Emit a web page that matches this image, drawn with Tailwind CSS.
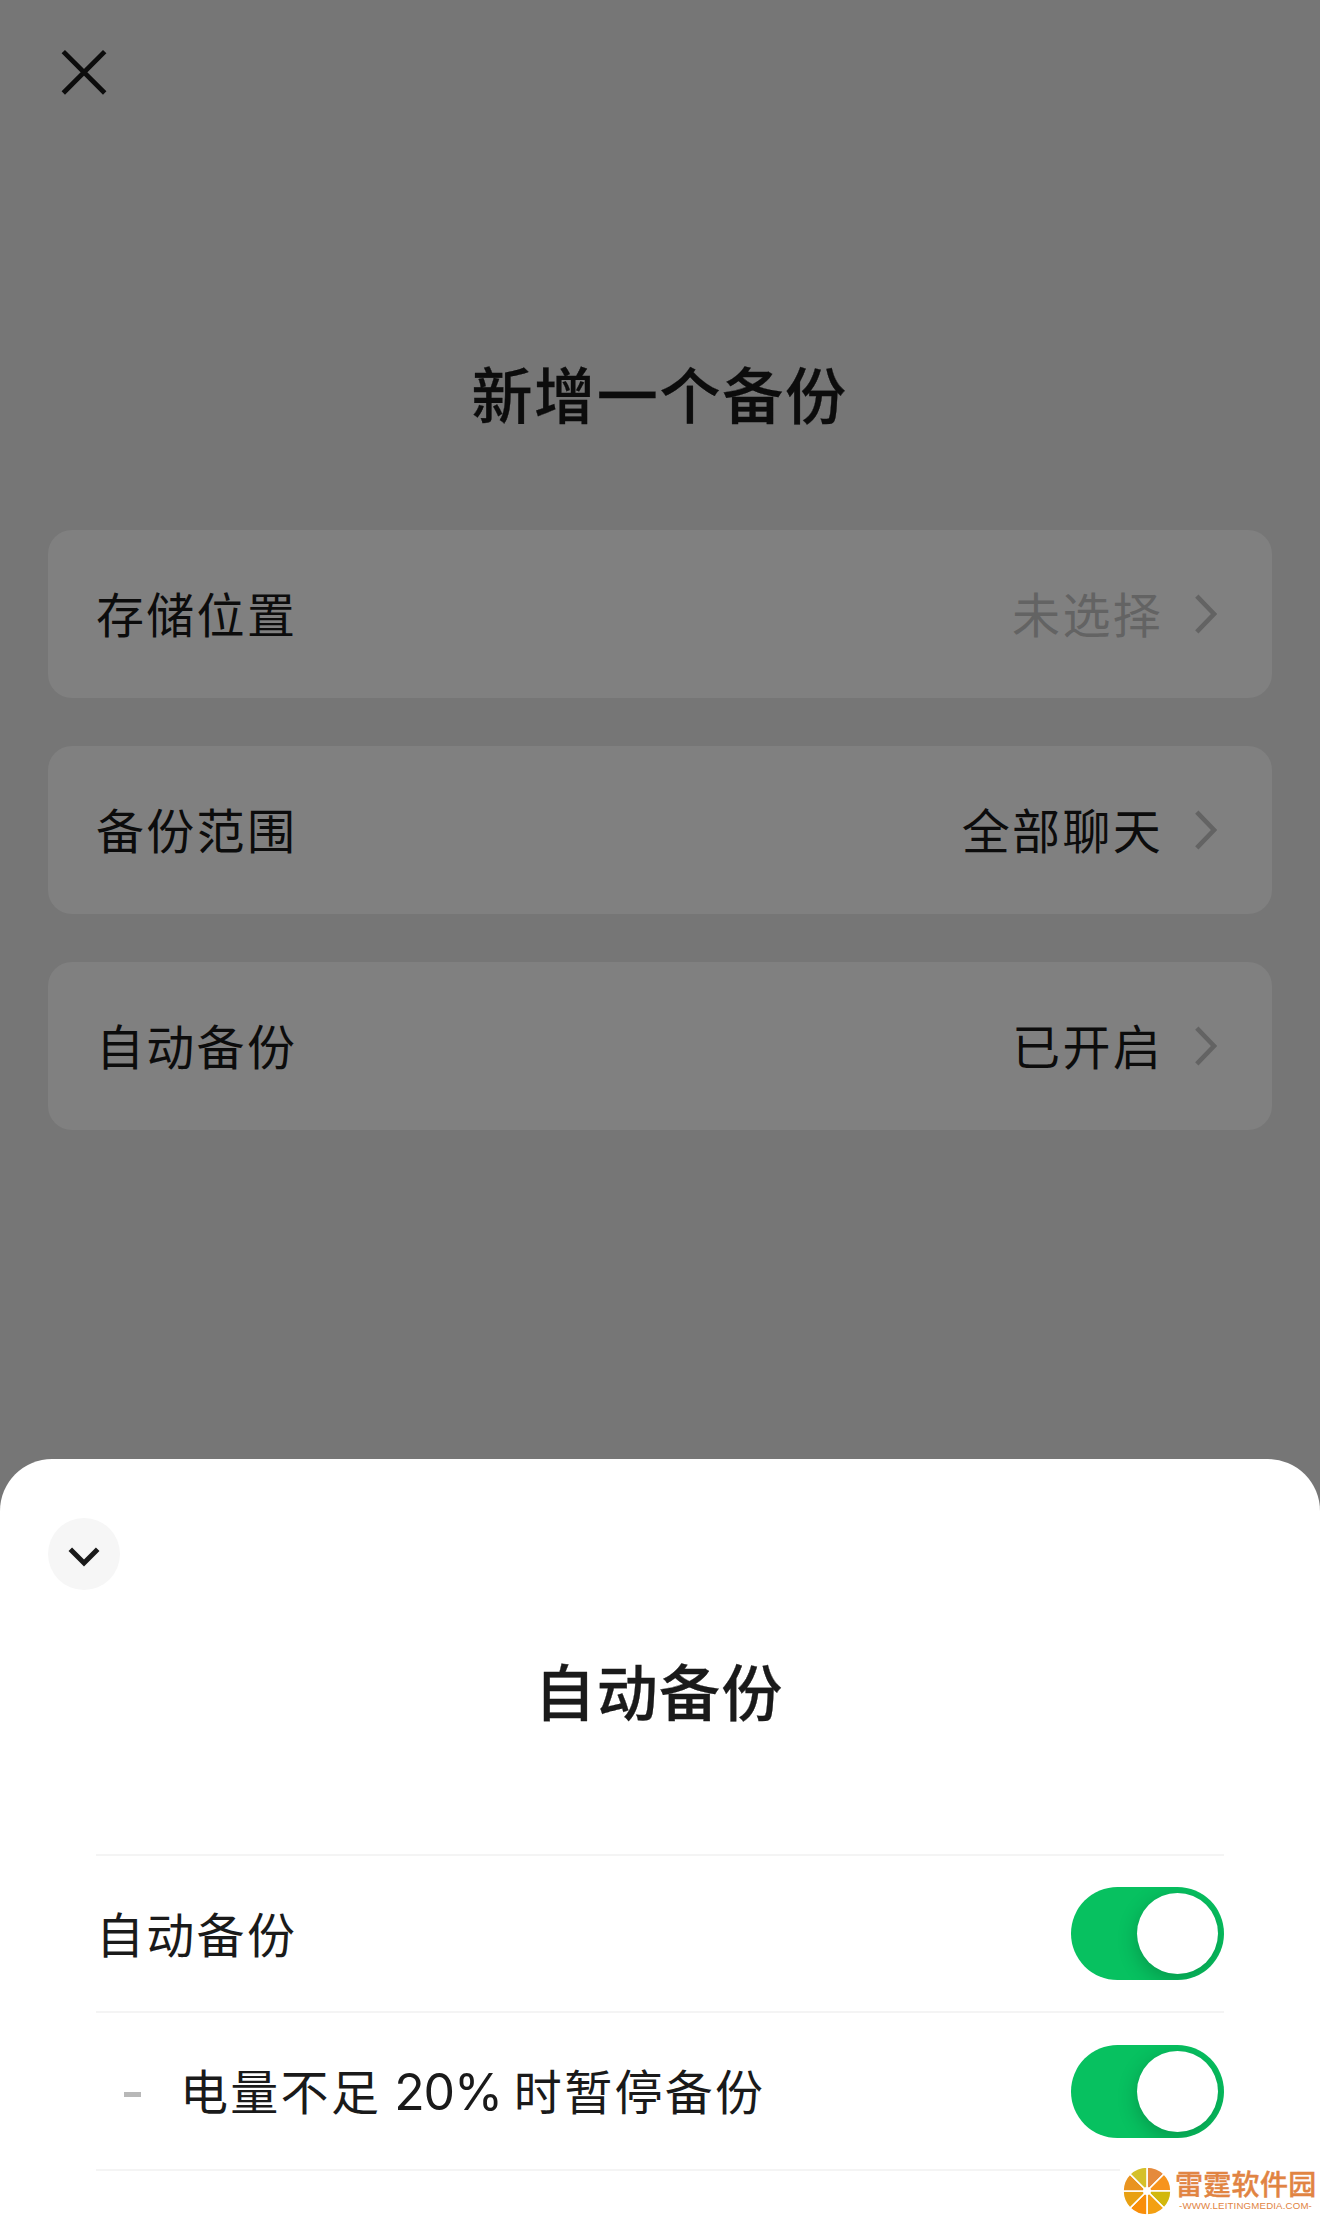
<!DOCTYPE html>
<html lang="zh-CN">
<head>
    <meta charset="UTF-8">
    <meta name="viewport" content="width=device-width, initial-scale=1.0">
    <title>自动备份</title>
    <script src="https://cdn.jsdelivr.net/npm/@tailwindcss/browser@4"></script>
</head>
<body class="relative flex flex-col h-[2216px] overflow-hidden bg-[#767676] text-[#0c0c0c] font-['Noto_Sans_CJK_SC',sans-serif]">
    <!-- 顶部关闭按钮 -->
    <header class="h-[350px] pt-[49px] pl-[61px]">
        <button class="block" aria-label="关闭">
            <svg class="w-[46px] h-[46px]" viewBox="0 0 46 46" fill="none" stroke="currentColor" stroke-width="4.8">
                <path d="M2.3 2.6 43.7 44M43.7 2.6 2.3 44" />
            </svg>
        </button>
    </header>

    <!-- 备份设置 -->
    <main class="flex flex-col h-[1109px] px-12">
        <h1 class="h-[180px] pr-[1px] text-center text-[61px] leading-[86px] font-medium tracking-[1.7px] [-webkit-text-stroke:0.3px]">新增一个备份</h1>
        <div class="flex flex-col gap-12">
            <div class="flex items-center h-[168px] px-12 rounded-3xl bg-[#808080] text-5xl tracking-[2.3px]">
                <span class="flex-1 pb-1">存储位置</span>
                <span class="pb-1 text-[#636363]">未选择</span>
                <svg class="w-[22px] h-10 ml-8 mr-[7px] text-[#636363]" viewBox="0 0 22 40" fill="none" stroke="currentColor" stroke-width="4.6">
                    <path d="M1.8 2.2 19 20 1.8 37.8" />
                </svg>
            </div>
            <div class="flex items-center h-[168px] px-12 rounded-3xl bg-[#808080] text-5xl tracking-[2.3px]">
                <span class="flex-1 pb-1">备份范围</span>
                <span class="pb-1">全部聊天</span>
                <svg class="w-[22px] h-10 ml-8 mr-[7px] text-[#636363]" viewBox="0 0 22 40" fill="none" stroke="currentColor" stroke-width="4.6">
                    <path d="M1.8 2.2 19 20 1.8 37.8" />
                </svg>
            </div>
            <div class="flex items-center h-[168px] px-12 rounded-3xl bg-[#808080] text-5xl tracking-[2.3px]">
                <span class="flex-1 pb-1">自动备份</span>
                <span class="pb-1">已开启</span>
                <svg class="w-[22px] h-10 ml-8 mr-[7px] text-[#636363]" viewBox="0 0 22 40" fill="none" stroke="currentColor" stroke-width="4.6">
                    <path d="M1.8 2.2 19 20 1.8 37.8" />
                </svg>
            </div>
        </div>
    </main>

    <!-- 底部弹窗 -->
    <section class="flex-1 pt-[59px] rounded-t-[52px] bg-white text-[#1a1a1a]">
        <button class="flex items-center justify-center w-[72px] h-[72px] ml-12 rounded-full bg-[#f6f6f6]" aria-label="收起">
            <svg class="w-8 h-5 mt-[5px]" viewBox="0 0 32 20" fill="none" stroke="currentColor" stroke-width="5">
                <path d="M2.3 2.3 16 16 29.7 2.3" />
            </svg>
        </button>
        <h2 class="h-[264px] pt-[55px] pr-[2px] text-center text-[61px] leading-[90px] font-medium tracking-[1.2px] [-webkit-text-stroke:0.3px]">自动备份</h2>
        <ul class="mx-24 border-t-2 border-[#f4f4f4] text-5xl tracking-[2.3px]">
            <li class="flex items-center h-[157px] border-b-2 border-[#f4f4f4]">
                <span class="flex-1 pb-1">自动备份</span>
                <span class="flex justify-end w-[153px] h-[93px] p-[6px] rounded-full overflow-hidden bg-[#07c160]">
                    <span class="w-[81px] h-[81px] rounded-full bg-white shadow-[0_6px_20px_rgba(0,0,0,0.22)]"></span>
                </span>
            </li>
            <li class="flex items-center h-[158px] border-b-2 border-[#f4f4f4]">
                <span class="w-[17px] h-[5px] mt-[6px] ml-7 mr-[39px] bg-[#b8b8b8]"></span>
                <span class="flex-1">电量不足 <span class="font-[Inter] text-[50px] leading-none tracking-[-1.2px]">20%</span><span class="-ml-[1px]"> 时暂停备份</span></span>
                <span class="flex justify-end w-[153px] h-[93px] p-[6px] rounded-full overflow-hidden bg-[#07c160]">
                    <span class="w-[81px] h-[81px] rounded-full bg-white shadow-[0_6px_20px_rgba(0,0,0,0.22)]"></span>
                </span>
            </li>
        </ul>
    </section>

    <!-- 水印 -->
    <div class="absolute right-0 bottom-0 flex w-[200px] h-[52px] pl-[3px] bg-white text-[#e18443]">
        <svg class="w-12 h-12 mt-[3px]" viewBox="-24 -24 48 48">
            <g stroke="#fff" stroke-width="1.6">
                <path fill="#e58a3c" d="M0 0V-24A24 24 0 0 1 17 -17Z" />
                <path fill="#f7941d" d="M0 0 17-17A24 24 0 0 1 24 0Z" />
                <path fill="#d2b80c" d="M0 0H24A24 24 0 0 1 17 17Z" />
                <path fill="#f3a012" d="M0 0 17 17A24 24 0 0 1 0 24Z" />
                <path fill="#f98e09" d="M0 0V24A24 24 0 0 1-17 17Z" />
                <path fill="#e8a012" d="M0 0-17 17A24 24 0 0 1-24 0Z" />
                <path fill="#e99420" d="M0 0H-24A24 24 0 0 1-17-17Z" />
                <path fill="#d5c02a" d="M0 0-17-17A24 24 0 0 1 0-24Z" />
            </g>
            <circle r="4" fill="#fff" />
        </svg>
        <div class="ml-1 whitespace-nowrap">
            <p class="h-[36px] pt-[3px] text-[28px] leading-8 font-medium tracking-[0.3px] [-webkit-text-stroke:0.4px]">雷霆软件园</p>
            <p class="pl-1 text-[9.7px] leading-[11px] font-['Liberation_Sans'] tracking-[0.15px]">-WWW.LEITINGMEDIA.COM-</p>
        </div>
    </div>
</body>
</html>
